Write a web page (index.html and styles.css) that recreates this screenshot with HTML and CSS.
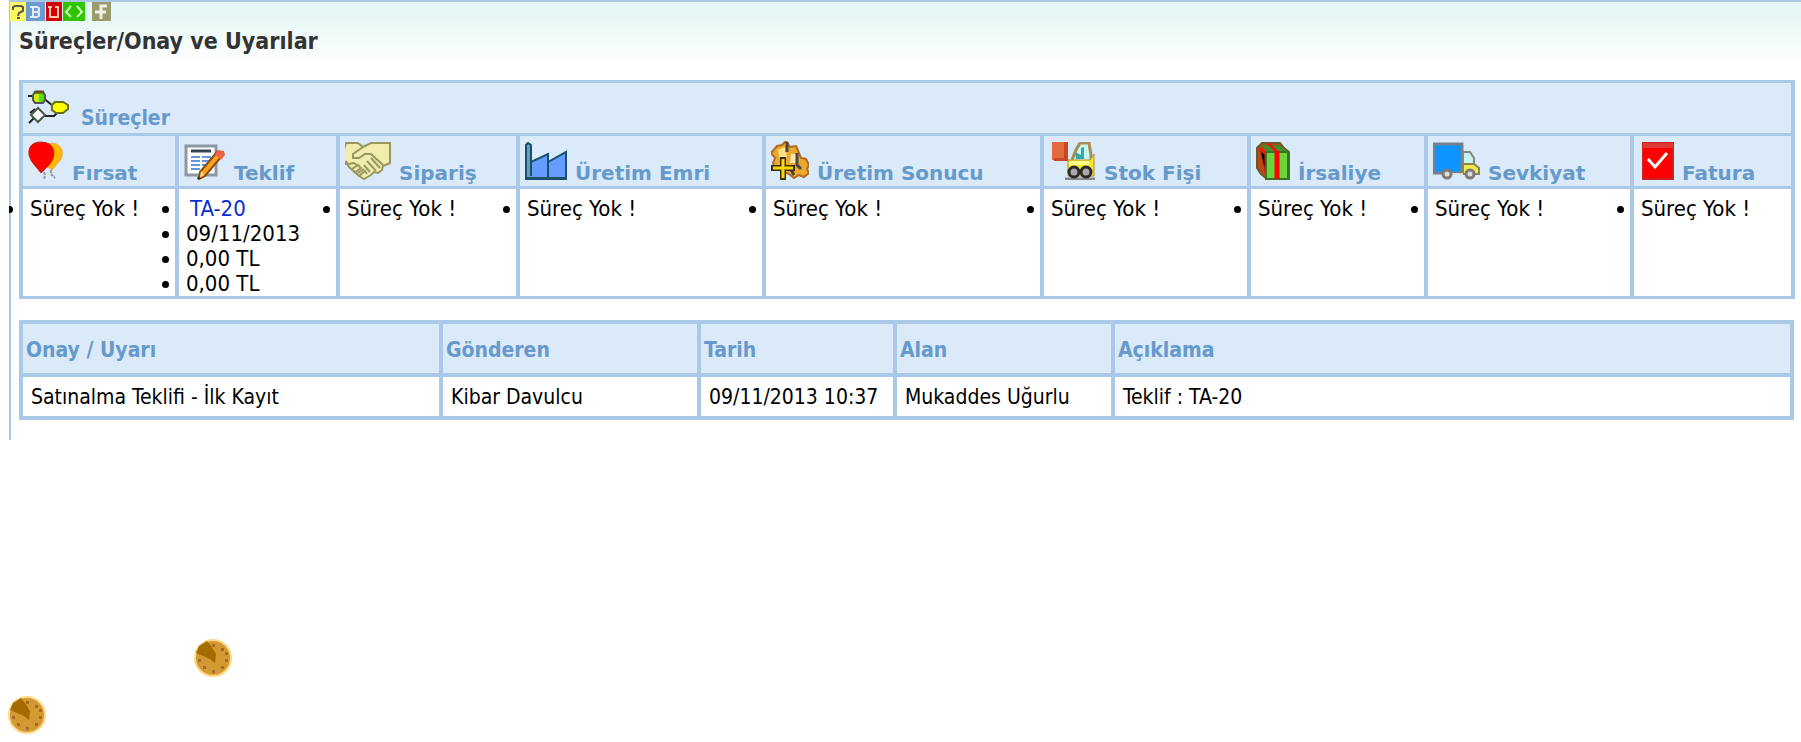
FILE: index.html
```html
<!DOCTYPE html>
<html lang="tr">
<head>
<meta charset="utf-8">
<title>Süreçler/Onay ve Uyarılar</title>
<link rel="stylesheet" href="styles.css">
</head>
<body>
<main class="panel">
  <nav class="tools" aria-label="Araçlar">
    <button type="button" aria-label="Yardım"><svg width="16" height="19" viewBox="0 0 16 19"><path fill="#fff766" d="M0 0h16v19H0z"/><path fill="none" stroke="#59594a" stroke-width="2" d="M3 8V5l2-1h6l2 1v4l-4 2-1 3M7 16h3"/></svg></button>
    <button type="button" aria-label="Bilgi"><svg width="19" height="19" viewBox="0 0 19 19"><path fill="#6b9bd0" d="M0 0h19v19H0z"/><path fill="none" stroke="#dcebfb" stroke-width="2" d="M4 5h7l2 1v3l-2 1 2 1v3l-2 1H4M7 5v10M7 10h4"/></svg></button>
    <button type="button" class="gap-xs" aria-label="Uyarı"><svg width="16" height="19" viewBox="0 0 16 19"><path fill="#d20000" d="M0 0h16v19H0z"/><path fill="none" stroke="#ffc9b0" stroke-width="2" d="M2 5h4M9 5h4M4 4v11h8V4"/></svg></button>
    <button type="button" class="gap-xs" aria-label="Kod"><svg width="22" height="19" viewBox="0 0 22 19"><path fill="#2fc400" d="M0 0h22v19H0z"/><path fill="none" stroke="#c9ffba" stroke-width="2" d="M8 4 3 10l5 5M14 4l5 6-5 5"/></svg></button>
    <button type="button" class="gap-m" aria-label="Form"><svg width="19" height="19" viewBox="0 0 19 19"><path fill="#999c6e" d="M0 0h19v19H0z"/><path fill="none" stroke="#f1f0e0" stroke-width="3" d="M15 4H9v13M3 10h11"/></svg></button>
  </nav>
  <h1>Süreçler/Onay ve Uyarılar</h1>

  <table class="grid processes">
    <colgroup><col class="p1"><col class="p2"><col class="p3"><col class="p4"><col class="p5"><col class="p6"><col class="p7"><col class="p8"><col class="p9"></colgroup>
    <thead>
      <tr><th colspan="9" class="section"><div class="head">
        <svg width="42" height="35" viewBox="0 0 42 35"><path fill="none" stroke="#222" stroke-width="2" d="M0 6h6M14 7l11 9M17 26h9l6-6M1 33l6-6M2 23l5-4"/><path fill="#52e000" stroke="#555" stroke-width="2" d="M7 2h8l2 3v5l-2 3H7l-2-3V5z"/><path fill="#c9ec00" d="M7 4h4v8H8l-2-2V5z"/><path stroke="#6b4a22" stroke-width="3" d="M7 2h9"/><path fill="#fff" stroke="#4a5648" stroke-width="2" d="m10 18 7 7-7 7-7-7z"/><path fill="#ffff00" stroke="#667014" stroke-width="2" d="M27 12h8l5 3v4l-5 4h-7l-4-3v-5z"/></svg>
        <span>Süreçler</span></div></th></tr>
      <tr>
        <th><div class="head"><svg width="36" height="39" viewBox="0 0 36 39"><path fill="#ffb800" stroke="#efa25c" d="M20 3q10-3 14 6 2 7-5 14l-5 6-8-6z"/><path fill="none" stroke="#999" stroke-width="2" stroke-dasharray="3 1" d="M23 29v4l4 4M16 31l1 3-1 4"/><path fill="#f00" stroke="#c5241c" d="M13 1C4 1 0 6 1 14q1 6 8 13l4 5 5-5q8-7 8-15Q25 1 13 1z"/></svg><span>Fırsat</span></div></th>
        <th><div class="head"><svg width="42" height="36" viewBox="0 0 42 36"><path fill="#fff" stroke="#8e98a2" stroke-width="3" d="M2 2h30v29H2z"/><path stroke="#344454" stroke-width="3" d="M7 7h20"/><path stroke="#6597dc" stroke-width="2" d="M7 13h9M18 13h9M7 17h9M18 17h7M7 21h9M18 21h5M7 25h9"/><path fill="#f8a51e" stroke="#8c4a14" stroke-width="2" d="m33 8 5 4-17 20-6 3 1-7z"/><path fill="#fbe08a" d="m17 27 3 4-4 3z"/><path fill="#ee624c" d="m31 10 3-4 6 1 1 4-4 5z"/><path fill="#532b12" d="m14 32 4 3h-5z"/></svg><span>Teklif</span></div></th>
        <th><div class="head"><svg width="46" height="38" viewBox="0 0 46 38"><path fill="#f1edac" stroke="#989764" stroke-width="2" d="M1 1h12l5 4 8-4h19v20l-7 3-1 4-4 3-4-1-3 3-7 4-5-3-3-3-7-6-3-6V22l-6-1z"/><path fill="none" stroke="#989764" stroke-width="2" d="M18 5 8 12v4h6l6-4h6l12 11M26 16l9 10M22 19l9 10M19 23l6 7M3 22l6-1 4 3M7 27l6-4 3 3-7 5M13 31l6-4M14 34l6-5 2 3"/></svg><span>Sipariş</span></div></th>
        <th><div class="head"><svg width="42" height="38" viewBox="0 0 42 38"><path fill="#649dff" stroke="#19516c" stroke-width="2" d="M1 37V3l2-2 3 2v17l17-8v8l18-10v27z"/><path fill="#66a0b4" d="M2 3h3v32H2z"/><path fill="none" stroke="#19516c" stroke-width="2" d="M6 19v15M23 13v23M1 36h40"/></svg><span>Üretim Emri</span></div></th>
        <th><div class="head"><svg width="38" height="39" viewBox="0 0 38 39"><path fill="#eaaa30" stroke="#ad6c20" stroke-width="2" d="m6 5 5-1 4-4 4 6 6-1 3 7 2 5 5 1 3 6-2 4 2 4-5 4-5-2-5 3-5-4-7-3-7-2-2-6 2-5-4-5z"/><path fill="#ffe08d" d="m7 9 7-3 2 10-7 3z"/><path fill="#ffe4b4" d="M20 13h5v9h-6z"/><path fill="none" stroke="#4c443b" stroke-width="3" d="M16 1v10M26 12v12l4 4M19 27l4 7"/><path stroke="#373014" stroke-width="6" d="M12 16v23M0 27h24"/><path stroke="#ffd700" stroke-width="3" d="M12 18v19M2 27h20"/></svg><span>Üretim Sonucu</span></div></th>
        <th class="wide-pad"><div class="head"><svg width="44" height="38" viewBox="0 0 44 38"><path fill="#e36a3c" d="M0 0h16v18H0z"/><path fill="#c84a24" d="M12 0h4v19H2v-3h10z"/><path fill="#c8f4f2" stroke="#a58d54" stroke-width="3" d="m20 18 4-10 4-7h9l2 12v8"/><path fill="#35a9aa" d="m23 10 6 3v-7l3-1v12h-8z"/><path fill="#f6e72f" stroke="#b29034" d="M16 18h22l4-6v22H16z"/><path fill="#ffff87" d="M17 19h20v4H17z"/><path stroke="#888" stroke-width="3" d="M13 37h30"/><circle cx="22" cy="30" r="5" fill="#aaa" stroke="#292929" stroke-width="3"/><circle cx="34" cy="30" r="5" fill="#aaa" stroke="#292929" stroke-width="3"/></svg><span>Stok Fişi</span></div></th>
        <th><div class="head"><svg width="34" height="38" viewBox="0 0 34 38"><path fill="#bd4815" stroke="#675c2d" stroke-width="2" d="m1 6 5-5h18l4 5 5 4v27H11l-6-5-4-6z"/><path fill="#3e8f28" d="M5 3h18l8 6H11z"/><path stroke="#e21c10" stroke-width="3" d="m4 7 6 5v20M12 1l9 9"/><path fill="#69d63c" stroke="#39751e" stroke-width="2" d="M10 10h22v27H10z"/><path stroke="#f00" stroke-width="5" d="M21 9v28"/></svg><span>İrsaliye</span></div></th>
        <th><div class="head"><svg width="47" height="38" viewBox="0 0 47 38"><path fill="#0c94ff" stroke="#75828b" stroke-width="3" d="M1 2h28v29H1z"/><path fill="#c8f2ef" stroke="#7c8988" stroke-width="2" d="M30 10h7l4 6v6H30z"/><path fill="#f0e850" stroke="#8b8650" stroke-width="2" d="M30 22h11l5 4v6H30z"/><path stroke="#ddd" stroke-width="2" d="M17 32h13"/><circle cx="14" cy="32" r="4" fill="#ddd" stroke="#7b7b7b" stroke-width="3"/><circle cx="37" cy="32" r="4" fill="#ddd" stroke="#7b7b7b" stroke-width="3"/></svg><span>Sevkiyat</span></div></th>
        <th class="wide-pad"><div class="head"><svg width="32" height="38" viewBox="0 0 32 38"><path fill="#f00" stroke="#c82320" stroke-width="2" d="M1 1h30v36H1z"/><path fill="#dc3834" d="M1 1h30v5H1z"/><path fill="none" stroke="#fff" stroke-width="3" d="m6 17 7 8 12-14"/></svg><span>Fatura</span></div></th>
      </tr>
    </thead>
    <tbody>
      <tr>
        <td><ul><li>Süreç Yok !</li></ul></td>
        <td><ul><li><a href="#teklif">TA-20</a></li><li>09/11/2013</li><li>0,00 TL</li><li>0,00 TL</li></ul></td>
        <td><ul><li>Süreç Yok !</li></ul></td>
        <td><ul><li>Süreç Yok !</li></ul></td>
        <td><ul><li>Süreç Yok !</li></ul></td>
        <td><ul><li>Süreç Yok !</li></ul></td>
        <td><ul><li>Süreç Yok !</li></ul></td>
        <td><ul><li>Süreç Yok !</li></ul></td>
        <td><ul><li>Süreç Yok !</li></ul></td>
      </tr>
    </tbody>
  </table>

  <table class="grid alerts">
    <colgroup><col class="a1"><col class="a2"><col class="a3"><col class="a4"><col class="a5"></colgroup>
    <thead>
      <tr><th>Onay / Uyarı</th><th>Gönderen</th><th>Tarih</th><th>Alan</th><th>Açıklama</th></tr>
    </thead>
    <tbody>
      <tr><td>Satınalma Teklifi - İlk Kayıt</td><td>Kibar Davulcu</td><td>09/11/2013 10:37</td><td>Mukaddes Uğurlu</td><td>Teklif : TA-20</td></tr>
    </tbody>
  </table>
</main>

<div class="clocks">
  <svg class="clock upper" width="40" height="40" viewBox="0 0 40 40"><circle cx="20" cy="20" r="18" fill="#d39a34" stroke="#ffd888" stroke-width="2"/><path fill="#a46b00" d="M22 25 17 21 3 15l3-7 8-5 4 5 5 8z"/><g fill="#a66b2a"><path d="M19 6h3v3h-3zM28 10h3v3h-3zM32 14h3v3h-3zM32 21h3v3h-3zM28 28h3v3h-3zM19 32h3v3h-3zM10 28h3v3h-3zM5 21h3v3H5z"/></g></svg>
  <svg class="clock" width="40" height="40" viewBox="0 0 40 40"><circle cx="20" cy="20" r="18" fill="#d39a34" stroke="#ffd888" stroke-width="2"/><path fill="#a46b00" d="M22 25 17 21 3 15l3-7 8-5 4 5 5 8z"/><g fill="#a66b2a"><path d="M19 6h3v3h-3zM28 10h3v3h-3zM32 14h3v3h-3zM32 21h3v3h-3zM28 28h3v3h-3zM19 32h3v3h-3zM10 28h3v3h-3zM5 21h3v3H5z"/></g></svg>
</div>
</body>
</html>
```
FILE: styles.css
```css
* { box-sizing: border-box; }

body {
  margin: 0;
  background: #fff;
  color: #000;
  font-family: Tahoma, "DejaVu Sans Condensed", "Noto Sans", sans-serif;
  font-size: 21px;
  line-height: 25px;
}

.panel {
  margin-left: 9px;
  padding: 0 7px 20px 8px;
  border-top: 2px solid #aac8e4;
  border-left: 2px solid #aac8e4;
  background: linear-gradient(#e8f6fa, #e4f6f4 12px, #fff 60px);
  overflow: clip;
  overflow-clip-margin: 2px;
}

.tools {
  display: flex;
  margin-left: -9px;
}

.tools button {
  display: block;
  padding: 0;
  border: 0;
  background: none;
  cursor: pointer;
}

.tools svg { display: block; }
.tools .gap-xs { margin-left: 1px; }
.tools .gap-m { margin-left: 7px; }

h1 {
  margin: 8px 0 26px;
  color: #333;
  font-size: 23px;
  line-height: 25px;
}

.grid {
  width: 100%;
  table-layout: fixed;
  background: #aac8e8;
}

.grid th {
  background: #daeaf8;
  color: #6699cc;
  text-align: left;
}

.grid td {
  background: #fff;
  vertical-align: top;
}

.processes { border-spacing: 4px 3px; margin-bottom: 21px; }
.processes th {
  height: 50px;
  padding: 0 3px 0 5px;
  vertical-align: bottom;
  font-family: Verdana, "DejaVu Sans", sans-serif;
  font-size: 20px;
}
.processes .section {
  padding-bottom: 2px;
  font-family: Tahoma, "DejaVu Sans Condensed", sans-serif;
  font-size: 21px;
}
.processes .wide-pad { padding-left: 8px; }

.head {
  display: flex;
  align-items: baseline;
  gap: 8px;
  white-space: nowrap;
}

.head svg { flex: none; }
.section .head { gap: 11px; }

.processes td { padding: 7px 0 0; height: 107px; font-size: 22px; }
.processes ul { margin: 0; padding: 0; }
.processes li { margin-left: 3px; padding-left: 4px; white-space: nowrap; }
.processes a { margin-left: 4px; color: #0a2fd0; text-decoration: none; }

.p1 { width: 152px; }
.p2 { width: 157px; }
.p3 { width: 176px; }
.p4 { width: 242px; }
.p5 { width: 274px; }
.p6 { width: 203px; }
.p7 { width: 173px; }
.p8 { width: 202px; }
.p9 { width: 157px; }

.alerts { border-spacing: 4px; }
.alerts th { height: 49px; padding: 3px 3px 0; }
.alerts td { height: 39px; padding: 8px 0 6px 8px; white-space: nowrap; }

.a1 { width: 416px; }
.a2 { width: 254px; }
.a3 { width: 192px; }
.a4 { width: 214px; }
.a5 { width: 675px; }

.clocks {
  display: flex;
  flex-direction: column;
  gap: 17px;
  padding: 198px 0 0 7px;
}

.upper { margin-left: 186px; }
```
